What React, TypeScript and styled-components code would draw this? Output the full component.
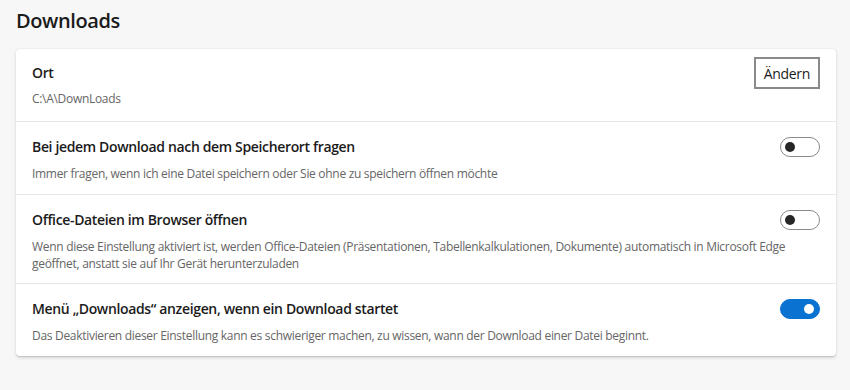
import React, { useState } from "react";
import styled, { createGlobalStyle } from "styled-components";

const Global = createGlobalStyle`
  html, body { margin: 0; padding: 0; background: #f7f7f7; }
  body { font-family: "Open Sans", "Noto Sans", sans-serif; color: #1b1b1b; }
  * { box-sizing: border-box; }
`;

const Page = styled.div`
  padding: 7px 14px 0 16px;
  width: 850px;
  height: 390px;
`;

const Title = styled.h1`
  margin: 0 0 15px 0;
  font-size: 20px;
  line-height: 27px;
  font-weight: 600;
  color: #1b1b1b;
  letter-spacing: -0.4px;
`;

const Card = styled.div`
  background: #fff;
  border-radius: 4px;
  box-shadow: 0 0.3px 0.9px rgba(0,0,0,0.11), 0 1.6px 3.6px rgba(0,0,0,0.13);
  width: 820px;
`;

const Row = styled.div<{ $pt: number; $pb: number }>`
  display: grid;
  grid-template-columns: 1fr auto;
  align-items: start;
  padding: ${(p) => p.$pt}px 16px ${(p) => p.$pb}px 16px;
  & + & { border-top: 1px solid #e6e6e6; }
`;

const Label = styled.div`
  font-size: 14px;
  line-height: 20px;
  font-weight: 600;
  color: #1b1b1b;
  letter-spacing: -0.35px;
`;

const Desc = styled.div<{ $mt: number }>`
  grid-column: 1 / -1;
  margin-top: ${(p) => p.$mt}px;
  font-size: 12px;
  line-height: 17px;
  color: #666;
  letter-spacing: -0.3px;
`;

const Button = styled.button`
  margin: -6px 0 -6px 0;
  height: 32px;
  padding: 0 8px;
  border: 2px solid #8a8a8a;
  border-radius: 0;
  background: #fff;
  font-family: inherit;
  font-size: 14px;
  color: #1b1b1b;
  letter-spacing: -0.3px;
`;

const Track = styled.button<{ $on: boolean }>`
  position: relative;
  width: 40px;
  height: 20px;
  border-radius: 10px;
  padding: 0;
  border: 1px solid ${(p) => (p.$on ? "#0a72d1" : "#8a8a8a")};
  background: ${(p) => (p.$on ? "#0a72d1" : "#fff")};
  cursor: pointer;
`;

const Knob = styled.span<{ $on: boolean }>`
  position: absolute;
  top: 4px;
  left: ${(p) => (p.$on ? "23px" : "4px")};
  width: 10px;
  height: 10px;
  border-radius: 50%;
  background: ${(p) => (p.$on ? "#fff" : "#262626")};
`;

function Toggle({ initial }: { initial: boolean }) {
  const [on, setOn] = useState(initial);
  return (
    <Track $on={on} onClick={() => setOn(!on)} aria-pressed={on}>
      <Knob $on={on} />
    </Track>
  );
}

export default function App() {
  return (
    <>
      <Global />
      <Page>
        <Title>Downloads</Title>
        <Card>
          <Row $pt={14} $pb={14}>
            <Label>Ort</Label>
            <Button>Ändern</Button>
            <Desc $mt={7}>C:\A\DownLoads</Desc>
          </Row>
          <Row $pt={15} $pb={12}>
            <Label>Bei jedem Download nach dem Speicherort fragen</Label>
            <Toggle initial={false} />
            <Desc $mt={8}>Immer fragen, wenn ich eine Datei speichern oder Sie ohne zu speichern öffnen möchte</Desc>
          </Row>
          <Row $pt={15} $pb={11}>
            <Label>Office-Dateien im Browser öffnen</Label>
            <Toggle initial={false} />
            <Desc $mt={8}>
              Wenn diese Einstellung aktiviert ist, werden Office-Dateien (Präsentationen, Tabellenkalkulationen, Dokumente) automatisch in Microsoft Edge geöffnet, anstatt sie auf Ihr Gerät herunterzuladen
            </Desc>
          </Row>
          <Row $pt={15} $pb={12}>
            <Label>Menü „Downloads“ anzeigen, wenn ein Download startet</Label>
            <Toggle initial={true} />
            <Desc $mt={8}>Das Deaktivieren dieser Einstellung kann es schwieriger machen, zu wissen, wann der Download einer Datei beginnt.</Desc>
          </Row>
        </Card>
      </Page>
    </>
  );
}
